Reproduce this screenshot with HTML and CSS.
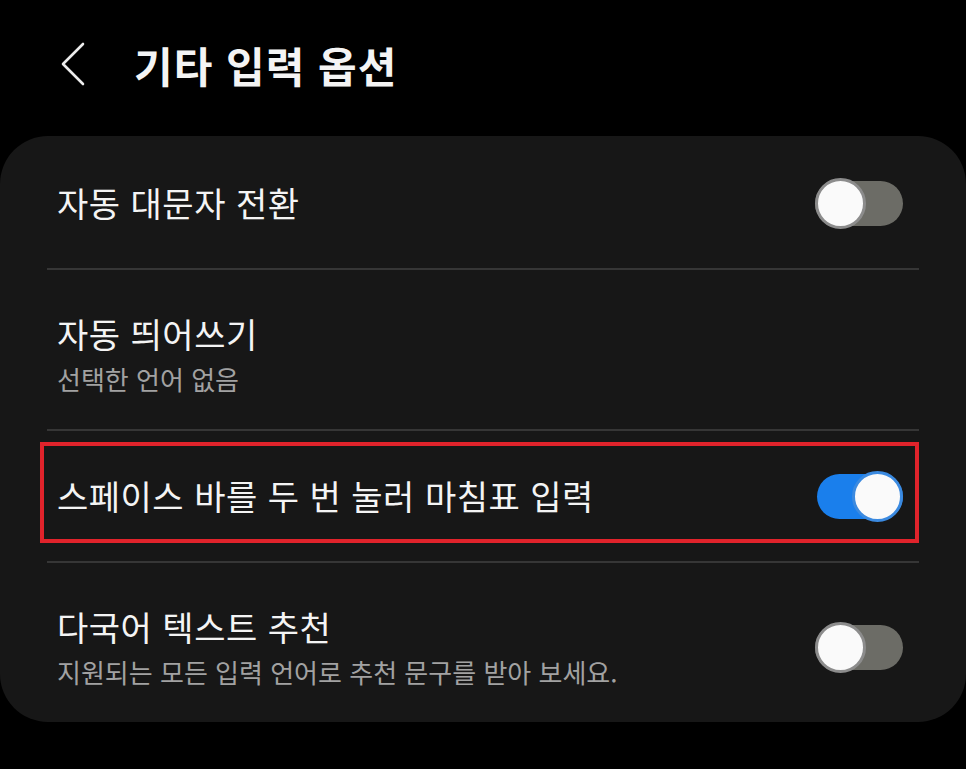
FILE: index.html
```html
<!DOCTYPE html>
<html lang="ko">
  <head>
    <meta charset="UTF-8" />
    <title>기타 입력 옵션</title>
    <link rel="stylesheet" href="styles.css">
  </head>
  <body>
    <div class="header">
      <svg class="back" width="26" height="44" viewBox="0 0 26 44">
        <path d="M23 2 L3 22 L23 42" fill="none" stroke="#ececec" stroke-width="2.6" stroke-linecap="round" stroke-linejoin="round" />
      </svg>
      <h1>기타 입력 옵션</h1>
    </div>

    <div class="card">
      <div class="row">
        <div class="text">
          <p class="title">자동 대문자 전환</p>
        </div>
        <div class="switch"><span class="knob"></span></div>
      </div>

      <div class="row two-line">
        <div class="text">
          <p class="title">자동 띄어쓰기</p>
          <p class="sub">선택한 언어 없음</p>
        </div>
      </div>

      <div class="row marked">
        <div class="text">
          <p class="title">스페이스 바를 두 번 눌러 마침표 입력</p>
        </div>
        <div class="switch on"><span class="knob"></span></div>
      </div>

      <div class="row two-line">
        <div class="text">
          <p class="title">다국어 텍스트 추천</p>
          <p class="sub">지원되는 모든 입력 언어로 추천 문구를 받아 보세요.</p>
        </div>
        <div class="switch"><span class="knob"></span></div>
      </div>
    </div>
  </body>
</html>
```

FILE: styles.css
```css
* {
  box-sizing: border-box;
  margin: 0;
  padding: 0;
}
body {
  font-family: "Noto Sans CJK KR", "Noto Sans", sans-serif;
  background: #000;
  color: #f4f4f4;
  width: 966px;
  height: 769px;
  overflow: hidden;
}
.header {
  height: 130px;
  display: flex;
  align-items: center;
  padding-left: 60px;
  gap: 48px;
}
.back {
  display: block;
  margin-top: -2px;
}
h1 {
  font-size: 42px;
  font-weight: 700;
  line-height: 50px;
  letter-spacing: 1px;
}
.card {
  margin-top: 6px;
  background: #171717;
  border-radius: 48px;
  padding: 2px 47px 0;
}
.row {
  display: flex;
  align-items: center;
  justify-content: space-between;
  min-height: 132px;
  padding: 0 16px 0 10px;
  position: relative;
}
.row:first-child {
  min-height: 130px;
}
.row + .row {
  border-top: 2px solid #363636;
}
.row.two-line {
  min-height: 159px;
  padding-top: 40px;
  padding-bottom: 31px;
}
.text {
  align-self: center;
}
.two-line .text {
  align-self: flex-start;
}
.title {
  font-size: 34px;
  line-height: 48px;
  letter-spacing: 0.5px;
  color: #f4f4f4;
}
.sub {
  font-size: 26px;
  line-height: 38px;
  margin-top: 2px;
  color: #a2a2a2;
}
.marked::before {
  content: "";
  position: absolute;
  left: -7px;
  right: 0;
  top: 11px;
  bottom: 18px;
  border: 4px solid #e0232b;
}
.switch {
  position: relative;
  width: 88px;
  height: 45px;
  border-radius: 23px;
  background: #6c6c66;
  flex-shrink: 0;
}
.knob {
  position: absolute;
  left: 0;
  top: -3px;
  width: 51px;
  height: 51px;
  border-radius: 50%;
  background: #fafafa;
  border: 3px solid #8c8c8c;
}
.switch.on {
  width: 86px;
  background: #1a7fec;
}
.switch.on .knob {
  left: auto;
  right: 0;
  border-color: #3b8ae0;
}
```
